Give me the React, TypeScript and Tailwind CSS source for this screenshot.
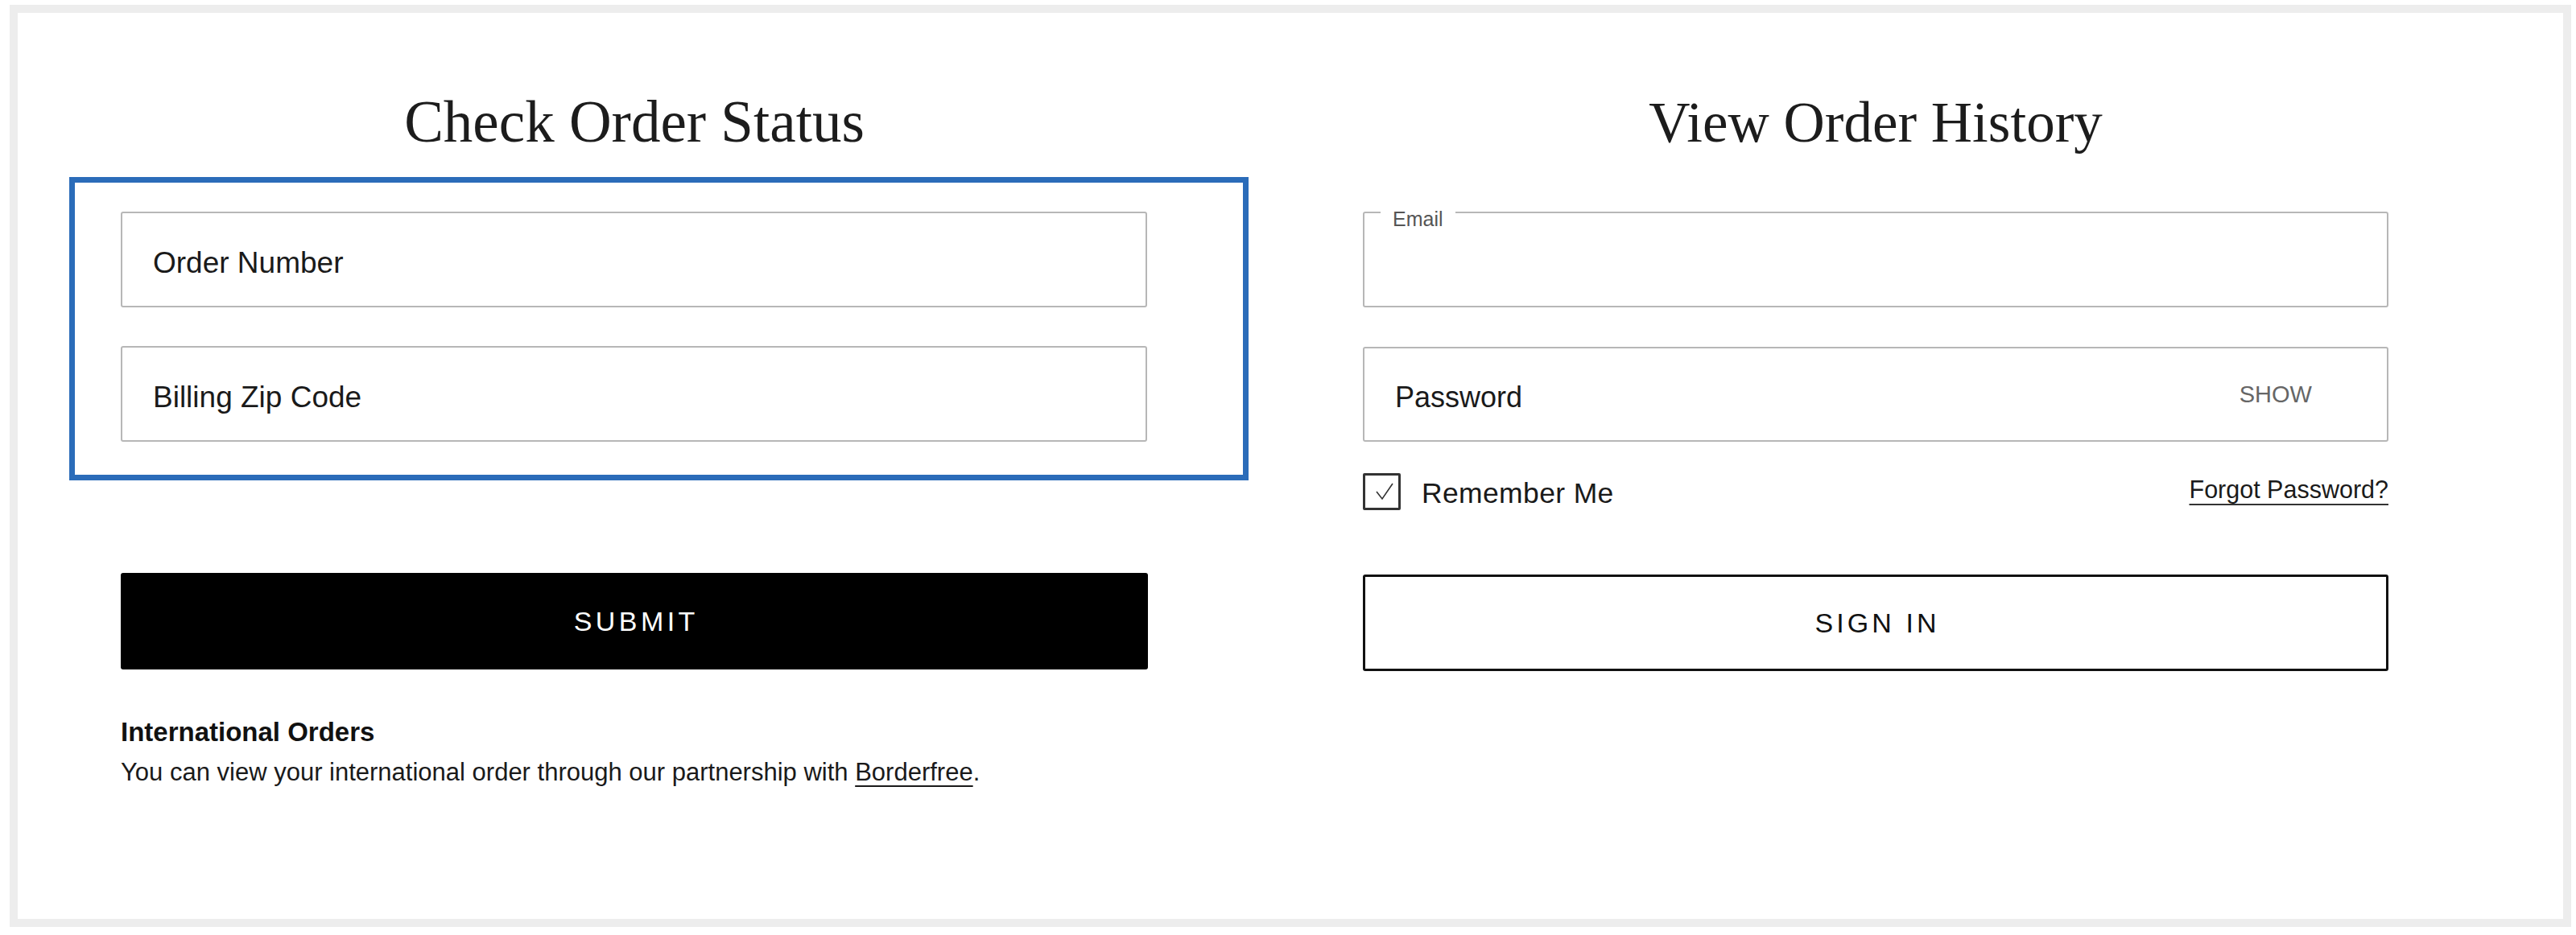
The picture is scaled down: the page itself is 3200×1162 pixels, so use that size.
import React from "react";

const sans = "font-['Liberation_Sans',Arial,sans-serif]";

function Field({ label, children }: { label?: string; children?: React.ReactNode }) {
  return (
    <div className="relative h-[119px] w-full rounded-[3px] border-2 border-[#b7b7b7] bg-white flex items-center pl-[38px] pt-[9px]">
      {label ? <span className="text-[37px] leading-[40px] text-[#1a1a1a]">{label}</span> : null}
      {children}
    </div>
  );
}

export default function App() {
  return (
    <div className={`min-h-[1162px] bg-white pt-[6px] pl-[12px] ${sans}`}>
      <div className="w-[3182px] h-[1146px] border-[10px] border-[#ededed] bg-white flex flex-row pl-[128px] pt-[100px]">
        {/* Left column */}
        <div className="w-[1276px] flex flex-col">
          <h2 className="h-[72px] text-[73px] leading-[72px] text-center font-['Liberation_Serif',serif] font-normal text-[#1c1c1c]">
            Check Order Status
          </h2>
          <div className="mt-[32px] ml-[-64px] mr-[-125px] border-[7px] border-[#2b6cb9] pt-[36px] pb-[41px] pl-[57px] pr-[119px] flex flex-col gap-[48px]">
            <Field label="Order Number" />
            <Field label="Billing Zip Code" />
          </div>
          <button className="mt-[115px] h-[120px] w-full rounded-[3px] bg-black text-white text-[34px] tracking-[0.13em] pl-[0.13em] flex items-center justify-center">
            SUBMIT
          </button>
          <div className="mt-[58px] text-[33px] leading-[40px] font-bold text-[#111]">International Orders</div>
          <p className="mt-[10px] text-[31px] leading-[40px] text-[#1a1a1a]">
            You can view your international order through our partnership with{" "}
            <span className="underline decoration-2 underline-offset-[6px]">Borderfree</span>.
          </p>
        </div>

        {/* Right column */}
        <div className="w-[1274px] ml-[267px] flex flex-col">
          <h2 className="h-[72px] text-[71px] leading-[72px] text-center font-['Liberation_Serif',serif] font-normal text-[#1c1c1c]">
            View Order History
          </h2>
          <div className="mt-[75px]">
            <Field>
              <span className="absolute left-[20px] top-[-5px] bg-white px-[15px] text-[25px] leading-[25px] text-[#555]">
                Email
              </span>
            </Field>
          </div>
          <div className="mt-[49px] h-[118px] w-full rounded-[3px] border-2 border-[#b7b7b7] flex items-center justify-between pl-[38px] pr-[93px] pt-[8px]">
            <span className="text-[36px] leading-[40px] text-[#1a1a1a]">Password</span>
            <span className="text-[29px] leading-[34px] text-[#666] mt-[-8px]">SHOW</span>
          </div>
          <div className="mt-[39px] h-[46px] flex items-center justify-between">
            <div className="flex items-center">
              <div className="w-[47px] h-[46px] border-[3px] border-[#333] rounded-[2px] flex items-center justify-center">
                <svg width="41" height="40" viewBox="0 0 41 40" className="block">
                  <path d="M14 20 L21 29 L34 10" fill="none" stroke="#333" strokeWidth="1.6" />
                </svg>
              </div>
              <span className="ml-[26px] text-[35.5px] leading-[40px] tracking-[0.01em] text-[#1a1a1a] mt-[4px]">Remember Me</span>
            </div>
            <span className="text-[30.5px] leading-[34px] text-[#1a1a1a] underline decoration-2 underline-offset-[7px] decoration-[#333] mt-[-6px]">
              Forgot Password?
            </span>
          </div>
          <button className="mt-[80px] h-[120px] w-full rounded-[3px] border-[3px] border-[#111] bg-white text-[#111] text-[34px] tracking-[0.12em] pl-[0.12em] flex items-center justify-center">
            SIGN IN
          </button>
        </div>
      </div>
    </div>
  );
}
